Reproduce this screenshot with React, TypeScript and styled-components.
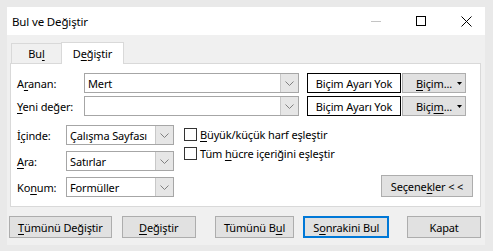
import React from 'react';
import styled, { createGlobalStyle } from 'styled-components';

const GlobalStyle = createGlobalStyle`
  html, body { margin: 0; padding: 0; background: #e9e9e9; }
  body {
    font-family: 'Segoe UI', 'Noto Sans', 'Open Sans', sans-serif;
    font-size: 11px;
    letter-spacing: -0.15px;
    color: #000;
  }
`;

const Chevron = () => (
    <svg width="9" height="5" viewBox="0 0 9 5">
        <polyline points="0.5,0.5 4.5,4.5 8.5,0.5" fill="none" stroke="#808080" strokeWidth="1" />
    </svg>
);

const Caret = () => (
    <svg width="5" height="3" viewBox="0 0 5 3">
        <polygon points="0,0 5,0 2.5,3" fill="#000" />
    </svg>
);

const Combo = ({ value, width }: { value?: string; width: number }) => (
    <ComboBox $width={width}>
        <ComboText>{value}</ComboText>
        <DropButton>
            <Chevron />
        </DropButton>
    </ComboBox>
);

const Check = ({ children }: { children: React.ReactNode }) => (
    <CheckRow>
        <CheckBox />
        <span>{children}</span>
    </CheckRow>
);

const App = () => (
    <>
        <GlobalStyle />
        <Window>
            <TitleBar>
                <Title>Bul ve Değiştir</Title>
                <Caption>
                    <svg width="10" height="10" viewBox="0 0 10 10">
                        <line x1="0" y1="5.5" x2="10" y2="5.5" stroke="#c4c4c4" />
                    </svg>
                    <svg width="10" height="10" viewBox="0 0 10 10">
                        <rect x="0.5" y="0.5" width="9" height="9" fill="none" stroke="#000" />
                    </svg>
                    <svg width="11" height="11" viewBox="0 0 11 11">
                        <line x1="0.5" y1="0.5" x2="10.5" y2="10.5" stroke="#000" />
                        <line x1="10.5" y1="0.5" x2="0.5" y2="10.5" stroke="#000" />
                    </svg>
                </Caption>
            </TitleBar>
            <Body>
                <TabStrip>
                    <Tab $width={51}>
                        Bu<U>l</U>
                    </Tab>
                    <Tab $width={63} $active>
                        D<U>e</U>ğiştir
                    </Tab>
                </TabStrip>
                <Panel>
                    <TopGrid>
                        <Label>
                            A<U>r</U>anan:
                        </Label>
                        <Combo value="Mert" width={215} />
                        <FormatPreview>Biçim Ayarı Yok</FormatPreview>
                        <SplitButton>
                            <span>
                                <U>B</U>içim...
                            </span>
                            <Caret />
                        </SplitButton>

                        <Label>
                            <U>Y</U>eni değer:
                        </Label>
                        <Combo width={215} />
                        <FormatPreview>Biçim Ayarı Yok</FormatPreview>
                        <SplitButton>
                            <span>
                                Biçi<U>m</U>...
                            </span>
                            <Caret />
                        </SplitButton>
                    </TopGrid>
                    <Options>
                        <OptionGrid>
                            <Label>
                                İ<U>ç</U>inde:
                            </Label>
                            <Combo value="Çalışma Sayfası" width={108} />
                            <Label>
                                <U>A</U>ra:
                            </Label>
                            <Combo value="Satırlar" width={108} />
                            <Label>
                                Ko<U>n</U>um:
                            </Label>
                            <Combo value="Formüller" width={108} />
                        </OptionGrid>
                        <Checks>
                            <Check>
                                <U>B</U>üyük/küçük harf eşleştir
                            </Check>
                            <Check>
                                Tüm <U>h</U>ücre içeriğini eşleştir
                            </Check>
                        </Checks>
                        <OptionsToggle>
                            Seçene<U>k</U>ler &lt; &lt;
                        </OptionsToggle>
                    </Options>
                </Panel>
                <ButtonRow>
                    <Button $width={103}>
                        <U>T</U>ümünü Değiştir
                    </Button>
                    <Button $width={74} $ml={10}>
                        <U>D</U>eğiştir
                    </Button>
                    <Button $width={80} $ml={19}>
                        Tümünü B<U>u</U>l
                    </Button>
                    <Button $width={86} $ml={9} $default>
                        S<U>o</U>nrakini Bul
                    </Button>
                    <Button $width={74} $ml={18}>
                        Kapat
                    </Button>
                </ButtonRow>
            </Body>
        </Window>
    </>
);

export default App;

const Window = styled.div`
    margin: 7px;
    width: 478px;
    height: 238px;
    background: #f0f0f0;
    display: flex;
    flex-direction: column;
`;

const TitleBar = styled.div`
    height: 28px;
    background: #fff;
    display: flex;
    align-items: center;
    padding-left: 5px;
    font-size: 11.5px;
`;

const Title = styled.div`
    flex: 1;
`;

const Caption = styled.div`
    display: flex;
    align-items: center;
    gap: 35px;
    padding-right: 13px;
`;

const Body = styled.div`
    flex: 1;
    display: flex;
    flex-direction: column;
    padding: 7px 4px 0 2px;
`;

const TabStrip = styled.div`
    height: 21px;
    display: flex;
    align-items: flex-end;
    padding-left: 2px;
`;

const Tab = styled.div<{ $width: number; $active?: boolean }>`
    box-sizing: border-box;
    width: ${({ $width }) => $width}px;
    height: ${({ $active }) => ($active ? 22 : 20)}px;
    margin-bottom: ${({ $active }) => ($active ? -1 : 0)}px;
    margin-left: ${({ $active }) => ($active ? -1 : 0)}px;
    background: ${({ $active }) => ($active ? '#fff' : '#f0f0f0')};
    border: 1px solid #d9d9d9;
    border-bottom: none;
    position: relative;
    z-index: ${({ $active }) => ($active ? 1 : 0)};
    display: flex;
    align-items: center;
    justify-content: center;
    padding-bottom: ${({ $active }) => ($active ? 1 : 0)}px;
`;

const Panel = styled.div`
    box-sizing: border-box;
    height: 144px;
    margin-left: 1px;
    background: #fff;
    border: 1px solid #d9d9d9;
    padding: 9px 7px 9px 6px;
    display: flex;
    flex-direction: column;
`;

const TopGrid = styled.div`
    display: grid;
    grid-template-columns: 67px 215px 94px 64px;
    grid-auto-rows: 20px;
    row-gap: 3px;
    align-items: center;

    & > :nth-child(4n + 3) {
        margin-left: 8px;
    }
    & > :nth-child(4n + 4) {
        margin-left: 9px;
    }
`;

const Label = styled.div`
    white-space: nowrap;
`;

const ComboBox = styled.div<{ $width: number }>`
    box-sizing: border-box;
    width: ${({ $width }) => $width}px;
    height: 20px;
    border: 1px solid #a6a6a6;
    background: #fff;
    display: flex;
    align-items: stretch;
`;

const ComboText = styled.div`
    flex: 1;
    display: flex;
    align-items: center;
    padding-left: 3px;
    white-space: nowrap;
    overflow: hidden;
`;

const DropButton = styled.div`
    width: 17px;
    background: #e6e6e6;
    border-left: 1px solid #c8c8c8;
    display: flex;
    align-items: center;
    justify-content: center;
`;

const FormatPreview = styled.div`
    box-sizing: border-box;
    width: 94px;
    height: 20px;
    border: 1px solid #000;
    display: flex;
    align-items: center;
    justify-content: center;
    white-space: nowrap;
`;

const SplitButton = styled.div`
    box-sizing: border-box;
    width: 64px;
    height: 20px;
    background: #e1e1e1;
    border: 1px solid #adadad;
    display: flex;
    align-items: center;
    justify-content: space-between;
    padding: 0 3px 0 13px;
    white-space: nowrap;
`;

const Options = styled.div`
    margin-top: 9px;
    display: flex;
    align-items: flex-start;
    height: 72px;
`;

const OptionGrid = styled.div`
    display: grid;
    grid-template-columns: 49px 108px;
    grid-auto-rows: 20px;
    row-gap: 6px;
    align-items: center;
`;

const Checks = styled.div`
    margin-left: 10px;
    display: flex;
    flex-direction: column;
`;

const CheckRow = styled.label`
    height: 19px;
    display: flex;
    align-items: center;
    gap: 3px;
    white-space: nowrap;
`;

const CheckBox = styled.span`
    box-sizing: border-box;
    width: 13px;
    height: 13px;
    border: 1px solid #333;
    background: #fff;
`;

const OptionsToggle = styled.div`
    box-sizing: border-box;
    margin-left: auto;
    align-self: flex-end;
    width: 92px;
    height: 22px;
    background: #e1e1e1;
    border: 1px solid #adadad;
    display: flex;
    align-items: center;
    justify-content: center;
    white-space: nowrap;
`;

const ButtonRow = styled.div`
    margin-top: 9px;
    display: flex;
`;

const Button = styled.div<{ $width: number; $ml?: number; $default?: boolean }>`
    box-sizing: border-box;
    width: ${({ $width }) => $width}px;
    height: 22px;
    margin-left: ${({ $ml }) => $ml || 0}px;
    background: #e1e1e1;
    border: ${({ $default }) => ($default ? '2px solid #0078d7' : '1px solid #adadad')};
    display: flex;
    align-items: center;
    justify-content: center;
    white-space: nowrap;
`;

const U = styled.span`
    text-decoration: underline;
    text-underline-offset: 2px;
`;
